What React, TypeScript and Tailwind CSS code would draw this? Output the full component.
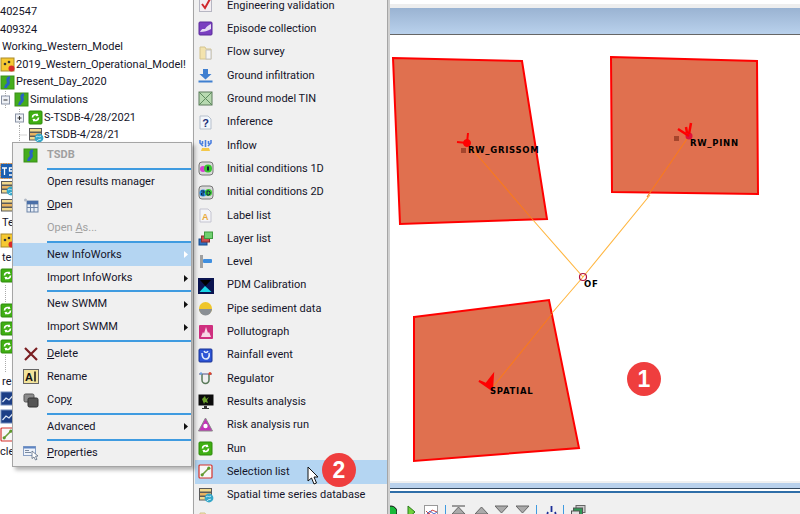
import React from 'react';

type IconProps = { name: string };

// small 16x16 app icons, drawn by hand
const Icon: React.FC<IconProps> = ({ name }) => {
  const body: Record<string, React.ReactNode> = {
    model: (
      <>
        <rect x="1" y="1" width="13" height="13" fill="#45ad1c" stroke="#3a8f18" />
        <path d="M10 2.500C5 4 10.500 7.500 7.500 9.500 6 10.500 5.500 12 5.500 13" stroke="#2a62c4" strokeWidth="3" fill="none" />
      </>
    ),
    warn: (
      <>
        <rect x="1" y="1" width="13" height="13" fill="#f6c932" stroke="#a98a2a" />
        <circle cx="5" cy="7" r="1.300" fill="#333" /><circle cx="9" cy="5" r="1.300" fill="#333" />
        <circle cx="11.500" cy="11.500" r="3" fill="#d92b2b" />
      </>
    ),
    run: (
      <>
        <rect x="1" y="1" width="13" height="13" rx="1" fill="#3fae12" stroke="#2e8a0d" />
        <path d="M4.500 7.500a3 3 0 0 1 5-2.200M10.500 7.500a3 3 0 0 1-5 2.200" stroke="#fff" strokeWidth="1.700" fill="none" />
        <path d="M9 3l1.600 3-3 .3zM6 12l-1.600-3 3-.3z" fill="#fff" />
      </>
    ),
    db: (
      <>
        <rect x="1.500" y="1.500" width="12" height="3.500" fill="#f2d98d" stroke="#5a5a5a" />
        <rect x="1.500" y="5.500" width="12" height="3.500" fill="#e9b35f" stroke="#5a5a5a" />
        <rect x="1.500" y="9.500" width="12" height="3.500" fill="#f2d98d" stroke="#5a5a5a" />
      </>
    ),
    dbglobe: (
      <>
        <rect x="1.500" y="1.500" width="12" height="3.500" fill="#f2d98d" stroke="#5a5a5a" />
        <rect x="1.500" y="5.500" width="12" height="3.500" fill="#e9b35f" stroke="#5a5a5a" />
        <rect x="1.500" y="9.500" width="8" height="3.500" fill="#f2d98d" stroke="#5a5a5a" />
        <circle cx="11" cy="11" r="4.400" fill="#35a7c9" /><path d="M8 10c2-2 3 1 5-1M9 14c1-2 3-1 4-2" stroke="#bfeaf5" fill="none" />
      </>
    ),
    ts: (
      <>
        <rect x="0.500" y="0.500" width="15" height="15" fill="#1c5fb0" stroke="#e8913a" strokeDasharray="1.500 1" />
        <path d="M2 5h5M4.500 5v7M13 5H9.500v3H13v4H9" stroke="#fff" strokeWidth="1.300" fill="none" />
      </>
    ),
    graph: (
      <>
        <rect x="1" y="1" width="14" height="13" fill="#1d3f86" stroke="#6d87b8" />
        <path d="M2.500 11L6 7l3 2 4.500-5" stroke="#dfe9f7" strokeWidth="1.200" fill="none" />
      </>
    ),
    selection: (
      <>
        <rect x="1" y="1" width="13" height="13" rx="1" fill="#f7f7f7" stroke="#d5332c" strokeWidth="1.200" />
        <path d="M4.500 10.500l6-6" stroke="#6d9c3a" strokeWidth="1.600" />
        <circle cx="4.200" cy="10.800" r="1.600" fill="#5f9a2f" /><circle cx="10.800" cy="4.200" r="1.600" fill="#5f9a2f" />
      </>
    ),
    check: (
      <>
        <rect x="1.500" y="0.500" width="12" height="13" fill="#f3eef2" stroke="#b6b6c2" />
        <path d="M4 6l3 4 5-9" stroke="#d0282e" strokeWidth="2" fill="none" />
      </>
    ),
    episode: (
      <>
        <rect x="1" y="1" width="13" height="13" rx="1" fill="#7a3fc0" stroke="#5a2a9a" />
        <path d="M2 11c2-4 3-3 5-3 2-3 4-4 6-5v5c-3 2-7 3-11 3z" fill="#e6dcf4" />
      </>
    ),
    flow: (
      <>
        <path d="M2 2h5l1 2h5v10H2z" fill="#f3e3ad" stroke="#d4c48f" />
        <rect x="8" y="5" width="5" height="9" fill="#f5f5f5" stroke="#c2c2c2" />
      </>
    ),
    infiltration: (
      <>
        <path d="M5 1h5v5h3.500L7.500 11.500 1.500 6H5z" fill="#3f7fd0" />
        <rect x="0.500" y="12.500" width="14" height="2" fill="#3f7fd0" />
      </>
    ),
    tin: (
      <>
        <rect x="1" y="1" width="13" height="13" fill="#b7d9b0" stroke="#5d7a5d" />
        <path d="M1 1l13 13M14 1L1 14" stroke="#5d8a5d" />
      </>
    ),
    inference: (
      <>
        <path d="M2 1h8l3 3v10H2z" fill="#f2f6fb" stroke="#b7c0cc" />
        <text x="4.200" y="12" fontSize="11" fontWeight="700" fill="#1c2f78" fontFamily="Liberation Sans">?</text>
      </>
    ),
    inflow: (
      <>
        <path d="M2 2v3l3 3M7.500 2v7M13 2v3l-3 3M4.500 3v3M10.500 3v3" stroke="#4a7fe0" strokeWidth="1.600" fill="none" />
        <path d="M4 10h7l1 3H3z" fill="#f4c84a" />
      </>
    ),
    init1: (
      <>
        <rect x="1" y="1" width="14" height="13" rx="3" fill="#d9d9d9" stroke="#777" />
        <circle cx="5" cy="8" r="3" fill="#d83fd0" /><circle cx="10" cy="7.500" r="4" fill="#37c52f" />
        <rect x="9" y="5.500" width="2" height="4" fill="#123" />
      </>
    ),
    init2: (
      <>
        <rect x="1" y="1" width="14" height="13" rx="3" fill="#d9d9d9" stroke="#777" />
        <circle cx="5" cy="8" r="3.500" fill="#2a8fe0" /><circle cx="10.500" cy="7.500" r="3.500" fill="#37c52f" />
        <path d="M3 6h3v2H3.500v2H6M9 6v4h2l1-1V7l-1-1z" stroke="#124" fill="none" />
      </>
    ),
    label: (
      <>
        <path d="M2 1h8l3 3v10H2z" fill="#f4f4f8" stroke="#c4c4d0" />
        <text x="4" y="12" fontSize="9" fontWeight="700" fill="#e8a93a" fontFamily="Liberation Sans">A</text>
      </>
    ),
    layer: (
      <>
        <rect x="1" y="8" width="8" height="6" fill="#2f6fc0" stroke="#174a8a" />
        <rect x="3.500" y="5" width="8" height="6" fill="#c94f4f" stroke="#8a2f2f" />
        <rect x="6.500" y="1" width="8" height="6.500" fill="#6fd06f" stroke="#3e9a3e" />
      </>
    ),
    level: (
      <>
        <rect x="2" y="1" width="3" height="13" fill="#a0a0a0" />
        <rect x="5" y="5" width="9" height="4" rx="1" fill="#3f8fe0" />
      </>
    ),
    pdm: (
      <>
        <rect x="0.500" y="0.500" width="15" height="15" fill="#0b1450" stroke="#0b1450" />
        <path d="M2 2h11L7.500 8z" fill="#000" /><path d="M1.500 14L7 8l6.500 6z" fill="#19d6e6" />
      </>
    ),
    pipe: (
      <>
        <circle cx="7.500" cy="7.500" r="6.500" fill="#efc62b" />
        <path d="M1 8h13a6.500 6.500 0 0 1-13 0z" fill="#8a8f94" />
      </>
    ),
    pollut: (
      <>
        <rect x="1" y="1" width="14" height="14" rx="1" fill="#cf2f7f" />
        <path d="M3 13l2-5 1 1.500L8 3l2 6 1-1 2 5z" fill="#f7d7e5" />
      </>
    ),
    rainfall: (
      <>
        <rect x="1" y="1" width="13" height="13" rx="1" fill="#2d55d6" stroke="#1b3596" />
        <path d="M4 5c0 5 2 6 4 6s4-2 3-6M6 3c1 2 3 2 4 0" stroke="#e6eefc" strokeWidth="1.500" fill="none" />
      </>
    ),
    regulator: (
      <>
        <path d="M1 3h13" stroke="#88a" strokeWidth="1.500" />
        <path d="M4 3v6a3.500 3.500 0 0 0 7 0V3" stroke="#5a7a5a" strokeWidth="1.500" fill="none" />
        <circle cx="12" cy="2.500" r="1.500" fill="#e0452a" /><circle cx="3" cy="2.500" r="1.200" fill="#6fa4e0" />
      </>
    ),
    results: (
      <>
        <rect x="0.500" y="0.500" width="15" height="11" fill="#0c0c0c" />
        <path d="M4 5l3-3 1 3 3-2-2 3 1 3-3-1-1 2z" fill="#6da32c" />
        <rect x="6" y="12" width="3" height="2" fill="#333" /><rect x="4" y="14" width="7" height="1" fill="#333" />
      </>
    ),
    risk: (
      <>
        <path d="M7.500 1L14.500 14H.500z" fill="#c234b8" stroke="#8a8a8a" />
        <circle cx="7.500" cy="9" r="2.200" fill="#fff" />
      </>
    ),
    del: <path d="M2 2l12 12M14 2L2 14" stroke="#7a1f22" strokeWidth="2.200" />,
    rename: (
      <>
        <rect x="0.500" y="0.500" width="15" height="14" fill="#f2e39a" stroke="#666" />
        <text x="2" y="12" fontSize="11" fontWeight="700" fill="#111" fontFamily="Liberation Sans">A</text>
        <path d="M12 2.500v10" stroke="#111" strokeWidth="1.500" />
      </>
    ),
    copy: (
      <>
        <rect x="1" y="1" width="10" height="8" rx="1.500" fill="#8c8c8c" stroke="#555" />
        <rect x="5" y="5" width="10" height="9" rx="1.500" fill="#555" stroke="#333" />
      </>
    ),
    open: (
      <>
        <rect x="4" y="4" width="11" height="11" fill="#e8eef7" stroke="#6e86a8" />
        <path d="M4 7h11M7.500 7v8M11 7v8M4 10.500h11" stroke="#6e86a8" />
        <rect x="4" y="4" width="11" height="3" fill="#4a6fa8" />
        <circle cx="2.500" cy="3" r="1.500" fill="#b0b8c4" />
      </>
    ),
    props: (
      <>
        <rect x="0.500" y="1.500" width="12" height="9" fill="#eef3fb" stroke="#8aa0c4" />
        <rect x="0.500" y="1.500" width="12" height="2" fill="#5f86c4" />
        <path d="M2 5.500h4M2 7.500h6" stroke="#7a8aa0" />
        <path d="M9 6l6 5-2.500.3 1.500 3-1.500.7-1.500-3L9 13.500z" fill="#fff" stroke="#5a6a80" strokeWidth=".8" />
      </>
    ),
  };
  return (
    <svg width="16" height="16" viewBox="0 0 16 16" className="shrink-0">
      {body[name]}
    </svg>
  );
};

type TreeRow = { text?: string; icon?: string; pad: number; guide?: 'plus' | 'minus' | 'tee' | 'line' };

const treeRows: TreeRow[] = [
  { text: '402547', pad: 0 },
  { text: '409324', pad: 0 },
  { text: 'Working_Western_Model', pad: 2 },
  { text: '2019_Western_Operational_Model!', icon: 'warn', pad: 0 },
  { text: 'Present_Day_2020', icon: 'model', pad: 0 },
  { text: 'Simulations', icon: 'model', pad: 1, guide: 'minus' },
  { text: 'S-TSDB-4/28/2021', icon: 'run', pad: 15, guide: 'plus' },
  { text: 'sTSDB-4/28/21', icon: 'dbglobe', pad: 15, guide: 'tee' },
  { pad: 0 },
  { icon: 'ts', pad: 0 },
  { icon: 'dbglobe', pad: 0 },
  { icon: 'db', pad: 0 },
  { text: 'Te', pad: 2 },
  { icon: 'warn', pad: 0 },
  { text: 'te', pad: 2 },
  { icon: 'run', pad: 0 },
  { pad: 1, guide: 'line' },
  { icon: 'run', pad: 0 },
  { icon: 'run', pad: 0 },
  { icon: 'run', pad: 0 },
  { pad: 1, guide: 'line' },
  { text: 're', pad: 2 },
  { icon: 'graph', pad: 0 },
  { icon: 'graph', pad: 0 },
  { icon: 'selection', pad: 0 },
  { text: 'cle', pad: 0 },
];

const Guide: React.FC<{ kind: string }> = ({ kind }) => (
  <svg width="13" height="18" viewBox="0 0 13 18" className="shrink-0">
    <path d="M4.500 0v18" stroke="#aaa" strokeDasharray="1 1" />
    {kind === 'tee' && <path d="M4.500 9h8" stroke="#aaa" strokeDasharray="1 1" />}
    {(kind === 'plus' || kind === 'minus') && (
      <>
        <rect x="0.500" y="5" width="8" height="8" fill="#eef1f6" stroke="#8a93a5" />
        <path d="M2.500 9h4" stroke="#333" />
        {kind === 'plus' && <path d="M4.500 7v4" stroke="#333" />}
      </>
    )}
  </svg>
);

const Tree = () => (
  <div className="w-[193px] shrink-0 pt-[3.500px] bg-white">
    {treeRows.map((r, i) => (
      <div
        key={i}
        className="flex h-[17.6px] items-center whitespace-nowrap text-[#15152a]"
        style={{ paddingLeft: r.pad }}
      >
        {r.guide && <Guide kind={r.guide} />}
        {r.icon && <Icon name={r.icon} />}
        {r.text && <span>{r.text}</span>}
      </div>
    ))}
  </div>
);

const Sep = () => (
  <div className="flex h-[3px] items-center pl-[34px]">
    <div className="h-[2px] w-full bg-[#3f9be0]" />
  </div>
);

const Arrow: React.FC<{ active?: boolean }> = ({ active }) => (
  <svg width="4" height="7" viewBox="0 0 4 7">
    <path d="M0 0l4 3.500L0 7z" fill={active ? '#ffffff' : '#111111'} />
  </svg>
);

type MenuRow = { label: React.ReactNode; icon?: string; arrow?: boolean; gray?: boolean; active?: boolean; bold?: boolean };

const Item: React.FC<MenuRow> = ({ label, icon, arrow, gray, active, bold }) => (
  <div
    className={`flex h-[23.3px] items-center pr-[3px] pl-[1px] ${active ? 'bg-[#b4d5f2]' : ''} ${
      gray ? 'text-[#a0a0a0]' : 'text-[#15152a]'
    } ${bold ? 'font-bold' : ''}`}
  >
    <div className="flex w-[33px] justify-center">{icon && <Icon name={icon} />}</div>
    <span className="flex-1 whitespace-nowrap">{label}</span>
    {arrow && <Arrow active={active} />}
  </div>
);

const ContextMenu = () => (
  <div className="absolute top-[142px] left-[12px] w-[180px] border border-[#a5a5a5] bg-[#f0f0f0] pt-[1px] pb-[1px] shadow-[3px_3px_4px_rgba(0,0,0,0.3)]">
    <Item label="TSDB" icon="model" gray bold />
    <Sep />
    <Item label="Open results manager" />
    <Item label={<><u>O</u>pen</>} icon="open" />
    <Item label={<>Open <u>A</u>s...</>} gray />
    <Sep />
    <Item label="New InfoWorks" arrow active />
    <Item label="Import InfoWorks" arrow />
    <Sep />
    <Item label="New SWMM" arrow />
    <Item label="Import SWMM" arrow />
    <Sep />
    <Item label={<><u>D</u>elete</>} icon="del" />
    <Item label="Rename" icon="rename" />
    <Item label={<>Cop<u>y</u></>} icon="copy" />
    <Sep />
    <Item label="Advanced" arrow />
    <Sep />
    <Item label={<><u>P</u>roperties</>} icon="props" />
  </div>
);

const subItems: [string, string][] = [
  ['Engineering validation', 'check'],
  ['Episode collection', 'episode'],
  ['Flow survey', 'flow'],
  ['Ground infiltration', 'infiltration'],
  ['Ground model TIN', 'tin'],
  ['Inference', 'inference'],
  ['Inflow', 'inflow'],
  ['Initial conditions 1D', 'init1'],
  ['Initial conditions 2D', 'init2'],
  ['Label list', 'label'],
  ['Layer list', 'layer'],
  ['Level', 'level'],
  ['PDM Calibration', 'pdm'],
  ['Pipe sediment data', 'pipe'],
  ['Pollutograph', 'pollut'],
  ['Rainfall event', 'rainfall'],
  ['Regulator', 'regulator'],
  ['Results analysis', 'results'],
  ['Risk analysis run', 'risk'],
  ['Run', 'run'],
  ['Selection list', 'selection'],
  ['Spatial time series database', 'dbglobe'],
  ['', 'flow'],
];

const SubMenu = () => (
  <div className="h-[514px] w-[195px] shrink-0 overflow-hidden border-x border-[#a5a5a5] bg-[#f0f0f0] shadow-[2px_0_3px_rgba(0,0,0,0.25)]">
    <div className="mt-[-5.500px] pl-[1px]">
      {subItems.map(([label, icon]) => (
        <div
          key={label}
          className={`flex h-[23.3px] items-center pl-[3px] text-[#15152a] ${
            label === 'Selection list' ? 'bg-[#b4d5f2]' : ''
          }`}
        >
          <Icon name={icon} />
          <span className="ml-[13px] whitespace-nowrap">{label}</span>
        </div>
      ))}
    </div>
  </div>
);

const MapDrawing = () => (
  <svg width="410" height="445" viewBox="390 35 410 445" className="absolute inset-0">
    <g fill="#e0704f" stroke="#ff0000" strokeWidth="2">
      <polygon points="393,58 522,61 547,219 400,224" />
      <polygon points="611,57 757,61 758,194 612,192" />
      <polygon points="414,317 549,300 579,448 414,461" />
    </g>
    <g stroke="#ffb640" strokeWidth="1.100" fill="none">
      <path d="M533,220L583,277L650,195M583,277L552,313" />
    </g>
    <g stroke="#f97a1c" strokeWidth="1.100" fill="none">
      <path d="M467,143L533,220M689,136L647,197M552,314L492,388" />
    </g>
    <g fill="#ff0000" stroke="#ff0000">
      <circle cx="467" cy="143" r="3.500" />
      <path d="M467,143L457,142M467,143L468,133" strokeWidth="2" />
      <circle cx="689" cy="136" r="3.500" fill="#e0103a" stroke="none" />
      <path d="M689,136L678,129M687,133L686,127M689,134L691,123" strokeWidth="2.500" />
      <path d="M492,390L479,381L486,384L493,375Z" strokeWidth="2" />
    </g>
    <rect x="461" y="148" width="5" height="5" fill="#a5452c" />
    <rect x="674" y="136" width="5" height="5" fill="#a5452c" />
    <circle cx="583" cy="277" r="3.500" fill="none" stroke="#b0103f" strokeWidth="1.200" />
  </svg>
);

const labelCls =
  "absolute font-['DejaVu_Sans'] text-[8.500px] leading-[10px] font-bold tracking-[0.7px] whitespace-nowrap text-black";

const Badge: React.FC<{ n: string; cls: string }> = ({ n, cls }) => (
  <div
    className={`absolute flex h-[34px] w-[34px] items-center justify-center rounded-full bg-[#ef3e3e] font-['Liberation_Sans'] text-[23px] font-bold text-white ${cls}`}
  >
    {n}
  </div>
);

const Toolbar = () => (
  <div className="flex h-[19px] items-start overflow-hidden bg-[#f0f0f0] pt-[10px]">
    <svg width="10" height="14" viewBox="0 0 10 14" className="ml-[-3px]">
      <circle cx="4" cy="7" r="6" fill="#19b93a" stroke="#111" />
    </svg>
    <svg width="10" height="14" viewBox="0 0 10 14" className="ml-[9px]">
      <path d="M2 1l7 6-7 6z" fill="#6fd23c" stroke="#2a7a1a" />
    </svg>
    <svg width="14" height="14" viewBox="0 0 14 14" className="ml-[8px]">
      <rect x="0.500" y="0.500" width="13" height="13" fill="#fff" stroke="#999" />
      <path d="M2 6l3 3 3-4 5 2" stroke="#d04545" fill="none" />
      <path d="M2 10l4-4 4 3 3-2" stroke="#4a6fd0" fill="none" />
    </svg>
    <div className="ml-[7px] h-[14px] w-[1px] bg-[#3f9be0]" />
    <svg width="14" height="14" viewBox="0 0 14 14" className="ml-[6px]">
      <path d="M0 1h13" stroke="#444" />
      <path d="M6.500 2L13 9H0z" fill="#aaa" stroke="#666" />
    </svg>
    <svg width="14" height="14" viewBox="0 0 14 14" className="ml-[9px]">
      <path d="M6.500 2L13 9H0z" fill="#aaa" stroke="#666" />
    </svg>
    <svg width="14" height="14" viewBox="0 0 14 14" className="ml-[6px]">
      <path d="M0 1h13L6.500 8z" fill="#aaa" stroke="#666" />
    </svg>
    <svg width="14" height="14" viewBox="0 0 14 14" className="ml-[7px]">
      <path d="M0 1h13L6.500 8z" fill="#aaa" stroke="#666" />
    </svg>
    <div className="ml-[6px] h-[14px] w-[1px] bg-[#3f9be0]" />
    <svg width="11" height="14" viewBox="0 0 11 14" className="ml-[9px]">
      <path d="M2 7a4 4 0 1 0 7 0M5.500 1v6" stroke="#1c2f98" strokeWidth="1.800" fill="none" />
    </svg>
    <div className="ml-[6px] h-[14px] w-[1px] bg-[#3f9be0]" />
    <svg width="15" height="14" viewBox="0 0 15 14" className="ml-[7px]">
      <rect x="5" y="0.500" width="9" height="7" fill="#ccc" stroke="#666" />
      <rect x="2.500" y="3" width="9" height="7" fill="#2f9a55" stroke="#555" />
      <rect x="0.500" y="6" width="8" height="7" fill="#e0e0e0" stroke="#555" />
    </svg>
  </div>
);

const MapPane = () => (
  <div className="flex h-[514px] min-w-0 flex-1 flex-col border-l-2 border-[#d0d0d0] bg-white">
    <div className="h-[4px] bg-white" />
    <div className="h-[4px] bg-[#eeeeee]" />
    <div className="h-[27px] shrink-0 border-b border-[#666] bg-gradient-to-b from-[#9ab3d2] to-[#b9d1ec]" />
    <div className="relative flex-1">
      <MapDrawing />
      <span className={`${labelCls} top-[110px] left-[78px]`}>RW_GRISSOM</span>
      <span className={`${labelCls} top-[103px] left-[300px]`}>RW_PINN</span>
      <span className={`${labelCls} top-[244px] left-[194px]`}>OF</span>
      <span className={`${labelCls} top-[351px] left-[100px]`}>SPATIAL</span>
      <Badge n="1" cls="top-[327px] left-[237px]" />
    </div>
    <div className="h-[2px] bg-[#f0f0f0]" />
    <div className="h-[6px] border-b border-[#33475e] bg-[#b9d1ec]" />
    <div className="h-[2px] bg-white" />
    <div className="h-[2px] bg-[#2f6ea8]" />
    <div className="h-[2px] bg-[#f0f0f0]" />
    <Toolbar />
  </div>
);

export default function App() {
  return (
    <div className="relative flex h-[514px] w-[800px] overflow-hidden bg-white font-['Roboto',sans-serif] text-[11px]">
      <Tree />
      <SubMenu />
      <MapPane />
      <ContextMenu />
      <Badge n="2" cls="top-[453px] left-[322px]" />
      {/* mouse pointer over the highlighted row */}
      <svg width="12" height="19" viewBox="0 0 12 19" className="absolute top-[466px] left-[307px]">
        <path d="M1 1v14l3.500-3 2.500 6 2.500-1-2.500-6H11z" fill="#fff" stroke="#111" />
      </svg>
    </div>
  );
}
